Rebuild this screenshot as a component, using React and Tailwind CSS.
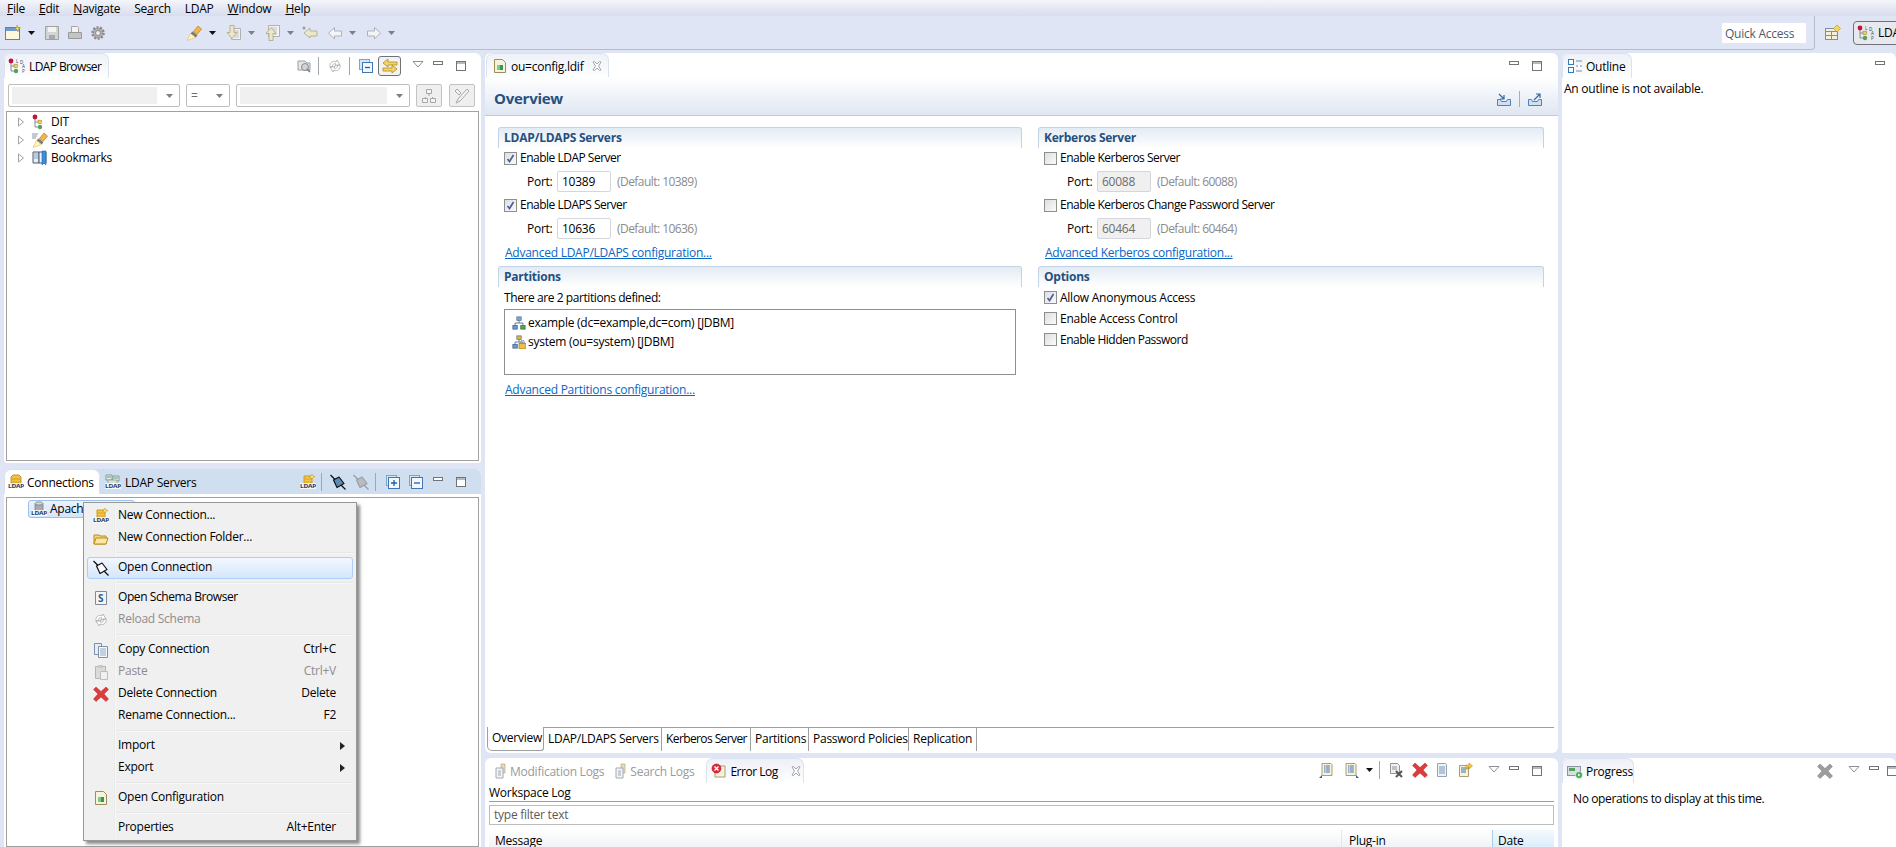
import React from 'react';

/* ── small icon helpers ─────────────────────────── */
const Svg = ({ children, w = 16, h = 16, box, className = '' }) => (
  <svg width={w} height={h} viewBox={box || `0 0 ${w} ${h}`} className={`shrink-0 ${className}`}>
    {children}
  </svg>
);

const DropArrow = ({ grey, className = '' }) => (
  <svg width="7" height="4" viewBox="0 0 7 4" className={`shrink-0 ${className}`}>
    <path d="M0 0h7L3.5 4z" fill={grey ? '#7c7f86' : '#111'} />
  </svg>
);
const ViewMenu = ({ className = '' }) => (
  <svg width="12" height="7" viewBox="0 0 12 7" className={`shrink-0 self-start mt-[8px] ${className}`}>
    <path d="M1 .5h10L6 6z" fill="#fff" stroke="#8a8f99" />
  </svg>
);
const MinBtn = ({ className = '' }) => (
  <svg width="10" height="4" viewBox="0 0 10 4" className={`shrink-0 self-start mt-[8px] ${className}`}>
    <rect x=".5" y=".5" width="9" height="3" fill="#fff" stroke="#6f737a" />
  </svg>
);
const MaxBtn = ({ className = '' }) => (
  <svg width="10" height="10" viewBox="0 0 10 10" className={`shrink-0 self-start mt-[8px] ${className}`}>
    <rect x=".5" y=".5" width="9" height="9" fill="#fff" stroke="#6f737a" />
    <path d="M0 2h10" stroke="#6f737a" />
  </svg>
);
const Sep = ({ className = '' }) => <div className={`w-px h-[18px] bg-[#a3a6ab] shrink-0 ${className}`} />;

const LdapTree = ({ letters }) => (
  <Svg w={18} h={16}>
    <path d="M3 4v9h4M3 8h4" stroke="#8a8a8a" fill="none" />
    <circle cx="3" cy="3" r="2.4" fill="#c4123e" />
    <rect x="6" y="6.200" width="3.400" height="3.400" fill="#ecd069" stroke="#a08a30" strokeWidth=".6" />
    <circle cx="8" cy="13" r="2.200" fill="#58a05a" />
    {letters && (
      <g fill="#1d3a66" fontSize="4.500">
        <text x="8" y="4.500">L</text>
        <text x="12" y="5.500">D</text>
        <text x="14" y="10">A</text>
        <text x="14" y="15">P</text>
      </g>
    )}
  </Svg>
);

const Torch = ({ lines }) => (
  <Svg>
    {lines && <path d="M0 2h6M0 4h5M0 6h4" stroke="#8794a8" />}
    <path d="M7.500 6.500L12 1l3.500 3-4.500 5.500z" fill="#f0b84a" stroke="#b47c1a" strokeWidth=".7" />
    <path d="M6.500 6.500l5 4-2 2-5-4z" fill="#77797e" />
    <path d="M4.500 8.500l5 4-8.500 3z" fill="#fff6c4" stroke="#e5b949" strokeWidth=".6" />
  </Svg>
);

const Bookmarks = () => (
  <Svg>
    <path d="M1 2h6v11H1z" fill="#e6eef8" stroke="#4a5a78" />
    <path d="M2 4h4M2 6h4M2 8h4" stroke="#8ea2bf" />
    <path d="M7 2h7v11H7z" fill="#eef3fa" stroke="#4a5a78" />
    <path d="M10 1h4v14l-2-2-2 2z" fill="#3b8fd8" stroke="#1f66a8" strokeWidth=".6" />
  </Svg>
);

const LdapWord = ({ y = 14, x = 0 }) => (
  <text x={x} y={y} fontSize="6" fontWeight="700" fill="#1d3a66" textLength="16" lengthAdjust="spacingAndGlyphs">
    LDAP
  </text>
);

const NewConn = () => (
  <Svg>
    <path d="M4 2h8v10H4z" fill="#f2c744" stroke="#c08a18" strokeWidth=".8" />
    <path d="M4 5h8M4 8h8" stroke="#d9a42a" />
    <path d="M12 0l1 2 2 .5-2 .8-1 2-1-2-2-.8 2-.5z" fill="#ffe680" stroke="#c08a18" strokeWidth=".5" />
    <rect x="0" y="9" width="16" height="6" fill="#fff" opacity=".75" />
    <LdapWord />
  </Svg>
);
const ConnsIcon = () => (
  <Svg>
    <path d="M5 1h6l2 2v9H3V3z" fill="#f0c24a" stroke="#b57f14" strokeWidth=".8" />
    <path d="M3 5h10M3 8h10" stroke="#d69f27" />
    <rect x="0" y="9" width="16" height="6" fill="#fff" opacity=".75" />
    <LdapWord />
  </Svg>
);
const ServersIcon = () => (
  <Svg>
    <path d="M1 1h6v5H1zM8 2h6v5H8z" fill="#e9eef2" stroke="#6c8c80" strokeWidth=".8" />
    <path d="M2 3h4M9 4h4" stroke="#58a05a" />
    <rect x="3" y="6" width="9" height="4" fill="#d9e2d8" stroke="#7d8d7d" strokeWidth=".6" />
    <rect x="0" y="9" width="16" height="6" fill="#fff" opacity=".8" />
    <LdapWord />
  </Svg>
);
const DbIcon = () => (
  <Svg>
    <path d="M4 2.500v8c0 2 8 2 8 0v-8" fill="#a9abb0" stroke="#70737a" strokeWidth=".7" />
    <ellipse cx="8" cy="2.500" rx="4" ry="1.600" fill="#d5d7da" stroke="#70737a" strokeWidth=".7" />
    <rect x="0" y="9" width="16" height="6" fill="#fff" opacity=".8" />
    <LdapWord />
  </Svg>
);
const Plug = ({ grey, dark }) => {
  const c = grey ? '#9a9da3' : '#111';
  return (
    <Svg>
      <path d="M.5 1L5 5.500M11 11l4.500 4.500" stroke={c} strokeWidth="1.300" />
      <path d="M3.500 6L9 3l5 6.500L7 13.500z" fill={grey ? '#b9bcc1' : dark ? '#5f8ab0' : '#f8fafd'} stroke={c} strokeWidth="1.200" strokeLinejoin="round" />
    </Svg>
  );
};
const Cross = ({ grey }) => (
  <Svg>
    <path
      d="M3 1l5 4.500L13 1l2.500 2.500L11 8l4.500 5L13 15.500 8 11l-5 4.500L.5 13 5 8 .5 3.500z"
      fill={grey ? '#9c9c9c' : '#dc3c3c'}
      stroke={grey ? '#7d7d7d' : '#b82828'}
      strokeWidth=".5"
    />
  </Svg>
);
const Refresh = () => (
  <Svg>
    <path d="M3 9c-1-4 3-7 6-5l1-2 3 5-5 .5 1-1.500C7 5 5 6.500 5.500 9zM13 7c1 4-3 7-6 5l-1 2-3-5 5-.5-1 1.500c2 1 4-.5 3.500-3z" fill="#fff" stroke="#a7a9ad" strokeWidth=".8" />
  </Svg>
);
const CloseX = ({ className = '' }) => (
  <svg width="10" height="10" viewBox="0 0 10 10" className={`shrink-0 ${className}`}>
    <path d="M1 1l1.500-.5L5 3l2.500-2.500L9 1 6.500 5 9 9l-1.500.5L5 7 2.500 9.500 1 9l2.500-4z" fill="#fff" stroke="#8c8f93" strokeWidth=".8" />
  </svg>
);
const ConfigFile = () => (
  <Svg>
    <path d="M2.500 1.500h8l3 3v10h-11z" fill="#f6f3dc" stroke="#9c8f55" />
    <rect x="5" y="7" width="6" height="5" fill="#2f9b52" />
    <rect x="5" y="7" width="3" height="5" fill="#7fc98f" />
  </Svg>
);
const LogDoc = ({ grey }) => (
  <Svg>
    <path d="M8 1h4v9H8z" fill={grey ? '#e6dcb8' : '#f0c24a'} stroke="#b7aa84" strokeWidth=".7" />
    <path d="M3 5h7v10H3z" fill="#f4f5f7" stroke="#a3a8b2" />
    <path d="M5 8h3M5 10h3M5 12h3" stroke="#a3a8b2" />
  </Svg>
);
const ListDoc = ({ corner }) => (
  <Svg>
    <path d="M3 1.500h9l1 1v11H3z" fill="#f6f2dc" stroke="#a99d72" />
    <path d="M5 4h6M5 6h6M5 8h6M5 10h6" stroke="#3c73b4" strokeDasharray="1 .5 4 0" />
    {corner === 'l' && <path d="M0 16l3-3v3z" fill="#2b66a8" />}
    {corner === 'r' && <path d="M16 16l-3-3v3z" fill="#2b66a8" />}
  </Svg>
);
const Partition = ({ lock }) => (
  <Svg w={14} h={14} box="0 0 16 16">
    <path d="M8 5v3M3.500 11V8h9v3" fill="none" stroke="#4d6c90" />
    <rect x="5.500" y="1" width="5" height="4" fill={lock ? '#e0b63a' : '#7ea7d4'} stroke="#4f6f94" strokeWidth=".8" />
    <rect x="1" y="11" width="5" height="4" fill="#6b9ad0" stroke="#2d5788" strokeWidth=".8" />
    <rect x="10" y="11" width="5" height="4" fill="#55a354" stroke="#2f6f30" strokeWidth=".8" />
    {lock && (
      <g>
        <rect x="8" y="9.500" width="8" height="6.500" fill="#eabf4a" stroke="#9a7a1c" strokeWidth=".8" />
        <path d="M10 9.500V8a2 2 0 0 1 4 0v1.500" fill="none" stroke="#8a8a8a" />
      </g>
    )}
  </Svg>
);

/* ── view chrome ────────────────────────────────── */
const ActiveTab = ({ icon, label, close, closeGap = 'ml-[9px]', className = '', labelClass = '' }) => (
  <div
    className={`flex items-center h-[25px] rounded-t-[7px] border-t border-x border-[#dde3ee] border-b-0 bg-gradient-to-b from-[#eef1f7] via-[#f5f7fb] to-white ${className}`}
  >
    {icon}
    <span className={`ml-[3px] pt-[2px] whitespace-nowrap ${labelClass}`}>{label}</span>
    {close && <CloseX className={closeGap} />}
  </div>
);

const Checkbox = ({ checked }) => (
  <div className="w-[13px] h-[13px] shrink-0 border border-[#8e8f8f] bg-gradient-to-br from-[#dcdfe3] to-[#fafafa] flex items-center justify-center">
    {checked && (
      <svg width="9" height="9" viewBox="0 0 9 9">
        <path d="M1.500 5l2 2.500L7.500 1" fill="none" stroke="#4f5f94" strokeWidth="1.700" />
      </svg>
    )}
  </div>
);

const CheckRow = ({ checked, label, tight, h = 'h-[20px]', className = '' }) => (
  <div className={`flex items-center ${h} pl-[6px] ${className}`}>
    <Checkbox checked={checked} />
    <span className={`ml-[3px] whitespace-nowrap ${tight ? 'tracking-[-0.5px]' : ''}`}>{label}</span>
  </div>
);

const PortRow = ({ value, hint, disabled }) => (
  <div className="flex items-center h-[21px] mt-[3px] pl-[29px]">
    <span className="w-[30px]">Port:</span>
    <div
      className={`w-[54px] h-[21px] border border-[#d3d6da] rounded-[2px] pl-[4px] flex items-center ${
        disabled ? 'bg-[#f0f0f0] text-[#6d6d6d]' : 'bg-white'
      }`}
    >
      {value}
    </div>
    <span className="ml-[6px] text-[#8b8b8b] tracking-[-0.55px]">{hint}</span>
  </div>
);

const Section = ({ title, children, className = '' }) => (
  <div className={className}>
    <div className="h-[21px] rounded-t-[3px] border-t border-x border-[#c3d3e6] bg-gradient-to-b from-[#e3ebf4] to-white pl-[5px] flex items-center font-bold text-[#25507e]">
      {title}
    </div>
    {children}
  </div>
);

const FormLink = ({ children, className = '' }) => (
  <div className={`pl-[7px] h-[20px] flex items-center text-[#0b66c4] ${className}`}>
    <span className="underline whitespace-nowrap">{children}</span>
  </div>
);

const Combo = ({ className = '', inner, children }) => (
  <div className={`h-[23px] border border-[#bdbdbd] rounded-[2px] flex items-center bg-white shrink-0 ${className}`}>
    {inner && <div className="flex-1 h-[17px] ml-[3px] mr-[9px] bg-[#f0f0f0]" />}
    {children}
    <DropArrow grey className="mr-[6px]" />
  </div>
);

const ToggleBtn = ({ children, className = '' }) => (
  <div className={`w-[26px] h-[23px] rounded-[2px] border border-[#c3c3c3] bg-[#efefef] flex items-center justify-center shrink-0 ${className}`}>
    {children}
  </div>
);

/* ── data ───────────────────────────────────────── */
const menuBar = [
  ['', 'F', 'ile', 'ml-[7px]'],
  ['', 'E', 'dit', 'ml-[14px]'],
  ['', 'N', 'avigate', 'ml-[14px]'],
  ['Se', 'a', 'rch', 'ml-[14px]'],
  ['LDAP', '', '', 'ml-[14px]'],
  ['', 'W', 'indow', 'ml-[14px]'],
  ['', 'H', 'elp', 'ml-[14px]'],
];

const contextMenu = [
  { label: 'New Connection...', icon: <NewConn /> },
  {
    label: 'New Connection Folder...',
    icon: (
      <Svg>
        <path d="M1 5h5l1 1h6v8H1z" fill="#f5d67a" stroke="#b98c22" />
        <path d="M1 14l2-6h12l-2 6z" fill="#fbe6a4" stroke="#b98c22" />
      </Svg>
    ),
  },
  { sep: true },
  { label: 'Open Connection', icon: <Plug />, active: true },
  { sep: true },
  {
    label: 'Open Schema Browser',
    cls: 'tracking-[-0.42px]',
    icon: (
      <Svg>
        <path d="M2.500 1.500h11v13h-11z" fill="#f5f5ef" stroke="#7d8aa0" />
        <text x="5" y="12" fontSize="10" fontWeight="700" fill="#2c5da0">S</text>
      </Svg>
    ),
  },
  { label: 'Reload Schema', icon: <Refresh />, disabled: true },
  { sep: true },
  {
    label: 'Copy Connection',
    keys: 'Ctrl+C',
    icon: (
      <Svg>
        <path d="M1.500 1.500h7v11h-7z" fill="#e6edf6" stroke="#7c8fa8" />
        <path d="M5.500 4.500h9v11h-9z" fill="#f4f7fb" stroke="#7c8fa8" />
        <path d="M7 7h6M7 9h6M7 11h6M7 13h6" stroke="#93a7c4" />
      </Svg>
    ),
  },
  {
    label: 'Paste',
    keys: 'Ctrl+V',
    disabled: true,
    icon: (
      <Svg>
        <path d="M2.500 2.500h10v12h-10z" fill="#dadada" stroke="#b5b5b5" />
        <rect x="5" y="1" width="5" height="3" fill="#c9c9c9" />
        <path d="M7.500 7.500h7v8h-7z" fill="#f0f0f0" stroke="#bdbdbd" />
      </Svg>
    ),
  },
  { label: 'Delete Connection', keys: 'Delete', icon: <Cross /> },
  { label: 'Rename Connection...', keys: 'F2' },
  { sep: true },
  { label: 'Import', sub: true },
  { label: 'Export', sub: true },
  { sep: true },
  { label: 'Open Configuration', icon: <ConfigFile /> },
  { sep: true },
  { label: 'Properties', keys: 'Alt+Enter' },
];

const editorTabs = [
  ['LDAP/LDAPS Servers', 'w-[118px]', ''],
  ['Kerberos Server', 'w-[89px]', 'tracking-[-0.6px]'],
  ['Partitions', 'w-[58px]', ''],
  ['Password Policies', 'w-[100px]', ''],
  ['Replication', 'w-[68px]', ''],
];

export default function App() {
  return (
    <div className="relative w-[1896px] h-[847px] overflow-hidden flex flex-col bg-[#dfe5f4] text-[12px] leading-none text-black font-['Open_Sans','Noto_Sans',sans-serif] tracking-[-0.25px]">
      {/* ── Menu bar ───────────────────────────────────── */}
      <div className="h-[16px] shrink-0 flex items-center pt-[2px] bg-gradient-to-b from-[#f4f5fa] to-[#d8ddee]">
        {menuBar.map(([before, key, after, gap]) => (
          <span key={before + key} className={`${gap} whitespace-nowrap`}>
            {before}
            {key ? <span className="underline">{key}</span> : null}
            {after}
          </span>
        ))}
      </div>

      {/* ── Toolbar ────────────────────────────────────── */}
      <div className="h-[34px] shrink-0 flex">
        <div className="flex-1 flex items-center pl-[5px] border-b border-r border-[#b5bccd] rounded-br-[4px]">
          <Svg>
            <rect x=".5" y="2.500" width="14" height="12" fill="#fdf8dc" stroke="#68809c" />
            <rect x="1" y="3" width="13" height="3" fill="#6d9bd0" />
            <path d="M12 0l1 2.500 2.500.5-2 1.200L13 7l-1-2.300-2.500-.7 2-1z" fill="#f7d65c" stroke="#b88d1e" strokeWidth=".5" />
          </Svg>
          <DropArrow className="ml-[7px]" />
          <Svg className="ml-[9px]">
            <path d="M1.500 1.500h13v13h-13z" fill="#d4d4d4" stroke="#a0a0a0" />
            <rect x="4" y="2" width="8" height="5" fill="#f3f3f3" />
            <rect x="5" y="10" width="6" height="4" fill="#a9a9a9" />
          </Svg>
          <Svg className="ml-[7px]">
            <path d="M4.500 1.500h6l1 1v5h-7z" fill="#f3f3f3" stroke="#a5a5a5" />
            <path d="M1.500 7.500h13v6h-13z" fill="#c4c4c4" stroke="#9a9a9a" />
          </Svg>
          <Svg className="ml-[7px]">
            <circle cx="8" cy="8" r="5.500" fill="#b0b0b0" stroke="#8a8a8a" strokeWidth="2.600" strokeDasharray="2 1.400" />
            <circle cx="8" cy="8" r="2.500" fill="#ededed" stroke="#8c8c8c" />
          </Svg>
          <div className="ml-[80px]">
            <Torch />
          </div>
          <DropArrow className="ml-[7px]" />
          <Svg className="ml-[10px]">
            <path d="M5.500 3.500h9v11h-9z" fill="#f2f2f2" stroke="#b0b0b0" />
            <path d="M8 6h5M8 8h5M8 10h5M8 12h5" stroke="#c4c4c4" />
            <path d="M4 .5h4v7h3l-5 6-5-6h3z" fill="#ece7c6" stroke="#aaa68c" strokeWidth=".8" />
          </Svg>
          <DropArrow grey className="ml-[6px]" />
          <Svg className="ml-[10px]">
            <path d="M3.500 .5h11v11h-11z" fill="#f2f2f2" stroke="#b0b0b0" />
            <path d="M6 3h6M6 5h6M9 7h3M9 9h3" stroke="#c4c4c4" />
            <path d="M4 15.500v-7H1l5-6 5 6H8v7z" fill="#ece7c6" stroke="#aaa68c" strokeWidth=".8" />
          </Svg>
          <DropArrow grey className="ml-[6px]" />
          <Svg className="ml-[8px]">
            <path d="M2 8l6-5v3h7v5H8v2z" fill="#ece7c6" stroke="#aaa88c" strokeWidth=".8" />
            <circle cx="2" cy="3" r="1.500" fill="#9c9c9c" />
          </Svg>
          <Svg className="ml-[9px]">
            <path d="M1.500 8l6-5.500V6h7v5h-7v3z" fill="#f4f4f4" stroke="#aeb2b8" />
          </Svg>
          <DropArrow grey className="ml-[6px]" />
          <Svg className="ml-[10px]">
            <path d="M14.500 8l-6-5.500V6h-7v5h7v3z" fill="#f4f4f4" stroke="#aeb2b8" />
          </Svg>
          <DropArrow grey className="ml-[6px]" />
          <div className="ml-auto mr-[8px] w-[84px] h-[20px] bg-white text-[#52596b] flex items-center pl-[3px] pt-[2px]">
            Quick Access
          </div>
        </div>
        <div className="w-[81px] shrink-0 flex items-center overflow-hidden">
          <Svg className="ml-[10px]">
            <rect x=".5" y="3.500" width="12" height="11" fill="#f4f0d8" stroke="#7e8ea4" />
            <path d="M.5 6.500h12M6.500 6.500v8M.5 10.500h12" stroke="#7e8ea4" />
            <path d="M12 0l3.500 3.500L12 7 8.500 3.500z" fill="#f7d65c" stroke="#b88d1e" strokeWidth=".6" />
          </Svg>
          <div className="ml-[7px] w-px h-[18px] bg-[#a3a6ab]" />
          <div className="ml-[5px] flex items-center pl-[3px] h-[24px] w-[60px] shrink-0 rounded-l-[4px] border border-[#6f7278] bg-[#e7e9ee]">
            <LdapTree letters />
            <span className="ml-[3px]">LDAP</span>
          </div>
        </div>
      </div>

      {/* ── Perspective ────────────────────────────────── */}
      <div className="flex-1 min-h-0 flex pt-[3px] pl-[4px] gap-[4px]">
        {/* Left column */}
        <div className="w-[477px] shrink-0 flex flex-col gap-[6px]">
          <div className="h-[410px] shrink-0 bg-white rounded-t-[6px] rounded-b-[3px] flex flex-col">
            <div className="h-[27px] shrink-0 flex items-start">
              <ActiveTab icon={<LdapTree letters />} label="LDAP Browser" labelClass="tracking-[-0.6px]" className="w-[105px] pl-[3px]" />
              <div className="ml-auto pr-[15px] flex items-center h-[25px]">
                <Svg>
                  <path d="M2 3h7l2 2h3v7H2z" fill="#e4e6e9" stroke="#9b9da1" />
                  <circle cx="9" cy="9" r="3.500" fill="#cfd3d6" stroke="#8a8c90" />
                  <path d="M11 11l3 3" stroke="#77797d" strokeWidth="1.500" />
                </Svg>
                <Sep className="ml-[6px]" />
                <div className="ml-[8px]">
                  <Refresh />
                </div>
                <Sep className="ml-[6px]" />
                <Svg className="ml-[8px]">
                  <rect x="1.500" y="1.500" width="10" height="10" fill="#d7e5f5" stroke="#7ea2ca" />
                  <rect x="4.500" y="4.500" width="10" height="10" fill="#f2f7fc" stroke="#3f76b4" />
                  <path d="M7 9.500h5" stroke="#1f5fa8" strokeWidth="1.300" />
                </Svg>
                <div className="ml-[4px] w-[23px] h-[20px] rounded-[3px] border border-[#6e7277] bg-[#f2f2f2] flex items-center justify-center">
                  <Svg>
                    <path d="M6 1L1 5l5 4V7h9V4H6zM10 7l5 4-5 4v-2H1v-3h9z" fill="#f1d46b" stroke="#b28a1c" strokeWidth=".8" />
                  </Svg>
                </div>
                <ViewMenu className="ml-[11px]" />
                <MinBtn className="ml-[9px]" />
                <MaxBtn className="ml-[13px]" />
              </div>
            </div>
            <div className="flex items-center h-[23px] mt-[4px] pl-[4px] shrink-0">
              <Combo inner className="w-[172px]" />
              <Combo className="w-[44px] ml-[6px] justify-between pl-[4px]">
                <span className="text-[#6d6d6d]">=</span>
              </Combo>
              <Combo inner className="w-[174px] ml-[6px]" />
              <ToggleBtn className="ml-[6px]">
                <Svg>
                  <path d="M5.500 1.500h5v4h-5zM1.500 10.500h5v4h-5zM9.500 10.500h5v4h-5z" fill="#f5f5f5" stroke="#a6a6a6" />
                  <path d="M8 6v2M5 9L4 10M11 9l1 1" stroke="#a6a6a6" />
                </Svg>
              </ToggleBtn>
              <ToggleBtn className="ml-[7px]">
                <Svg>
                  <path d="M3 1l4 4-2 2-4-4zM13 1l2 2L6 13l-4 2 2-4z" fill="#f5f5f5" stroke="#a6a6a6" />
                </Svg>
              </ToggleBtn>
            </div>
            <div className="mt-[4px] mx-[2px] mb-[2px] flex-1 border border-[#a0a0a0] bg-white pt-[1px]">
              {[
                ['DIT', <LdapTree key="d" />],
                ['Searches', <Torch key="s" lines />],
                ['Bookmarks', <Bookmarks key="b" />],
              ].map(([label, icon]) => (
                <div key={label} className="h-[18px] flex items-center pl-[10px]">
                  <svg width="8" height="10" viewBox="0 0 8 10" className="shrink-0">
                    <path d="M1.500 1l5 4-5 4z" fill="#fff" stroke="#a3a3a3" />
                  </svg>
                  <div className="ml-[7px] w-[16px]">{icon}</div>
                  <span className="ml-[3px]">{label}</span>
                </div>
              ))}
            </div>
          </div>

          <div className="flex-1 min-h-0 bg-white rounded-t-[6px] flex flex-col">
            <div className="h-[25px] shrink-0 flex items-center bg-[#cfdff0] rounded-t-[6px]">
              <ActiveTab icon={<ConnsIcon />} label="Connections" className="w-[96px] pl-[3px] bg-none bg-white" />
              <div className="ml-[5px]">
                <ServersIcon />
              </div>
              <span className="ml-[4px] pt-[2px] whitespace-nowrap">LDAP Servers</span>
              <div className="ml-auto pr-[15px] flex items-center h-full">
                <NewConn />
                <Sep className="ml-[5px]" />
                <div className="ml-[8px]">
                  <Plug dark />
                </div>
                <div className="ml-[7px]">
                  <Plug grey />
                </div>
                <Sep className="ml-[6px]" />
                <Svg className="ml-[9px]">
                  <rect x="1.500" y="1.500" width="10" height="10" fill="#d7e5f5" stroke="#7ea2ca" />
                  <rect x="3.500" y="3.500" width="11" height="11" fill="#f2f7fc" stroke="#3f76b4" />
                  <path d="M6 9h6M9 6v6" stroke="#1f5fa8" strokeWidth="1.300" />
                </Svg>
                <Svg className="ml-[7px]">
                  <rect x="1.500" y="1.500" width="10" height="10" fill="#d7e5f5" stroke="#7ea2ca" />
                  <rect x="3.500" y="3.500" width="11" height="11" fill="#f2f7fc" stroke="#3f76b4" />
                  <path d="M6 9h6" stroke="#1f5fa8" strokeWidth="1.300" />
                </Svg>
                <MinBtn className="ml-[9px]" />
                <MaxBtn className="ml-[13px]" />
              </div>
            </div>
            <div className="mt-[3px] mx-[2px] flex-1 border border-[#a0a0a0] bg-white pt-[2px]">
              <div className="ml-[21px] w-[107px] h-[18px] flex items-center pl-[2px] rounded-[3px] border border-[#9cc0ea] bg-gradient-to-b from-[#eaf3fd] to-[#d3e6fb]">
                <DbIcon />
                <span className="ml-[3px] pb-[1px]">Apache DS</span>
              </div>
            </div>
          </div>
        </div>

        {/* Center column */}
        <div className="w-[1073px] shrink-0 flex flex-col gap-[5px]">
          <div className="h-[700px] shrink-0 bg-white rounded-t-[6px] rounded-b-[6px] flex flex-col">
            <div className="h-[24px] shrink-0 flex items-start">
              <ActiveTab icon={<ConfigFile />} label="ou=config.ldif" close className="ml-px w-[123px] pl-[5px]" />
              <div className="ml-auto pr-[16px] flex items-start h-[20px]">
                <MinBtn />
                <MaxBtn className="ml-[13px]" />
              </div>
            </div>
            <div className="h-[39px] shrink-0 border-b border-[#bccadd] bg-gradient-to-b from-white to-[#dfe7f1] flex items-center pl-[9px] pt-[5px]">
              <span className="text-[15px] font-bold text-[#27507f]">Overview</span>
              <div className="ml-auto pr-[15px] flex items-center">
                <Svg>
                  <path d="M1.500 8.500v6h13v-6h-3l-1 2h-5l-1-2z" fill="#cfe0f2" stroke="#4f82b8" />
                  <path d="M3 3l5 5M8 4v4H4" fill="none" stroke="#2f6aa8" strokeWidth="1.200" />
                </Svg>
                <div className="ml-[7px] w-px h-[16px] bg-[#9fb0c6]" />
                <Svg className="ml-[7px]">
                  <path d="M1.500 8.500v6h13v-6h-3l-1 2h-5l-1-2z" fill="#cfe0f2" stroke="#4f82b8" />
                  <path d="M7 9l6-6M9 3h4v4" fill="none" stroke="#2f6aa8" strokeWidth="1.200" />
                </Svg>
              </div>
            </div>

            {/* Form */}
            <div className="flex-1 min-h-0 flex pl-[13px] pt-[11px]">
              <div className="w-[524px] shrink-0">
                <Section title="LDAP/LDAPS Servers">
                  <CheckRow checked tight label="Enable LDAP Server" />
                  <PortRow value="10389" hint="(Default: 10389)" />
                  <CheckRow checked tight label="Enable LDAPS Server" className="mt-[3px]" />
                  <PortRow value="10636" hint="(Default: 10636)" />
                  <FormLink className="mt-[4px]">Advanced LDAP/LDAPS configuration...</FormLink>
                </Section>
                <Section title="Partitions" className="mt-[3px]">
                  <div className="h-[21px] pl-[6px] flex items-center tracking-[-0.42px]">There are 2 partitions defined:</div>
                  <div className="mx-[6px] mt-[1px] h-[66px] border border-[#8f8f8f] pt-[3px] pl-[7px]">
                    <div className="h-[19px] flex items-center">
                      <Partition />
                      <span className="ml-[2px] whitespace-nowrap">example (dc=example,dc=com) [JDBM]</span>
                    </div>
                    <div className="h-[19px] flex items-center">
                      <Partition lock />
                      <span className="ml-[2px] whitespace-nowrap">system (ou=system) [JDBM]</span>
                    </div>
                  </div>
                  <FormLink className="mt-[5px]">Advanced Partitions configuration...</FormLink>
                </Section>
              </div>
              <div className="w-[506px] shrink-0 ml-[16px]">
                <Section title="Kerberos Server">
                  <CheckRow tight label="Enable Kerberos Server" />
                  <PortRow disabled value="60088" hint="(Default: 60088)" />
                  <CheckRow tight label="Enable Kerberos Change Password Server" className="mt-[3px]" />
                  <PortRow disabled value="60464" hint="(Default: 60464)" />
                  <FormLink className="mt-[4px]">Advanced Kerberos configuration...</FormLink>
                </Section>
                <Section title="Options" className="mt-[3px]">
                  <CheckRow checked label="Allow Anonymous Access" h="h-[21px]" />
                  <CheckRow label="Enable Access Control" h="h-[21px]" />
                  <CheckRow tight label="Enable Hidden Password" h="h-[21px]" />
                </Section>
              </div>
            </div>

            {/* Editor pages */}
            <div className="h-[26px] shrink-0 flex pl-[2px] pr-[4px]">
              <div className="w-[57px] h-[24px] rounded-bl-[5px] rounded-br-[3px] border-b border-r border-l border-[#a0a0a0] flex items-center pl-[4px] pb-[1px]">
                Overview
              </div>
              <div className="flex-1 flex border-t border-[#a0a0a0]">
                {editorTabs.map(([label, width, cls]) => (
                  <div key={label} className={`${width} ${cls} h-[23px] border-r border-[#a0a0a0] flex items-center pl-[4px] pb-[2px] whitespace-nowrap`}>
                    {label}
                  </div>
                ))}
              </div>
            </div>
          </div>

          {/* Log view */}
          <div className="flex-1 min-h-0 bg-white rounded-t-[6px] flex flex-col overflow-hidden">
            <div className="h-[24px] shrink-0 flex items-start">
              <div className="flex items-center h-[25px] pl-[8px] text-[#9a9a9a]">
                <LogDoc grey />
                <span className="ml-[1px] pt-[2px] whitespace-nowrap">Modification Logs</span>
              </div>
              <div className="flex items-center h-[25px] pl-[9px] text-[#9a9a9a]">
                <LogDoc grey />
                <span className="ml-[1px] pt-[2px] whitespace-nowrap">Search Logs</span>
              </div>
              <ActiveTab
                icon={
                  <Svg>
                    <path d="M6 3h8v11H4V9" fill="#f6f2dc" stroke="#a99d72" />
                    <circle cx="5.500" cy="5.500" r="4.500" fill="#e0283c" stroke="#a81020" strokeWidth=".6" />
                    <path d="M3.500 3.500l4 4M7.500 3.500l-4 4" stroke="#fff" strokeWidth="1.300" />
                  </Svg>
                }
                label="Error Log"
                labelClass="tracking-[-0.5px]"
                close
                closeGap="ml-[13px]"
                className="ml-[12px] w-[98px] pl-[4px]"
              />
              <div className="ml-auto pr-[16px] flex items-center h-[24px]">
                <ListDoc corner="l" />
                <div className="ml-[8px]">
                  <ListDoc corner="r" />
                </div>
                <DropArrow className="ml-[7px]" />
                <Sep className="ml-[6px]" />
                <Svg className="ml-[8px]">
                  <path d="M2.500 1.500h7l2 2v8h-9z" fill="#eef0f2" stroke="#8e959e" />
                  <path d="M4 5h5M4 7h5" stroke="#8e959e" />
                  <path d="M8 9l6 6M14 9l-6 6" stroke="#555" strokeWidth="2" />
                </Svg>
                <div className="ml-[8px]">
                  <Cross />
                </div>
                <Svg className="ml-[6px]">
                  <path d="M3.500 1.500h8l1 1v12h-9z" fill="#eef3fa" stroke="#93a3b8" />
                  <path d="M5 5h6M5 7h6M5 9h6M5 11h6" stroke="#7d93b2" />
                </Svg>
                <Svg className="ml-[7px]">
                  <path d="M2.500 3.500h9v11h-9z" fill="#f6f2dc" stroke="#a99d72" />
                  <path d="M4 6h5M4 8h5M4 10h5" stroke="#3c73b4" />
                  <path d="M9 7V3h3V1l3.500 3L12 7V5h-1v2z" fill="#f3c64a" stroke="#b88d1e" strokeWidth=".6" />
                </Svg>
                <ViewMenu className="ml-[15px]" />
                <MinBtn className="ml-[9px]" />
                <MaxBtn className="ml-[13px]" />
              </div>
            </div>
            <div className="h-[20px] shrink-0 mx-[4px] border-b border-[#a0a0a0] flex items-center pt-[2px]">Workspace Log</div>
            <div className="h-[20px] shrink-0 mt-[3px] mx-[4px] border border-[#bcbcbc] flex items-center pl-[4px] pb-[1px] text-[#5b5b5b]">
              type filter text
            </div>
            <div className="h-[17px] shrink-0 mt-[5px] mx-[4px] flex items-end bg-gradient-to-b from-white to-[#f1f2f5]">
              <div className="w-[852px] pl-[6px] h-[9px] leading-[5px]">Message</div>
              <div className="w-[151px] h-full border-l border-[#e4e5e7] pl-[7px] flex items-end">
                <span className="h-[9px] leading-[5px]">Plug-in</span>
              </div>
              <div className="flex-1 h-full border-l border-[#a9cfe8] pl-[5px] bg-gradient-to-b from-[#f2f9fd] to-[#dceefa] flex items-end">
                <span className="h-[9px] leading-[5px]">Date</span>
              </div>
            </div>
          </div>
        </div>

        {/* Right column */}
        <div className="flex-1 min-w-0 flex flex-col gap-[5px] overflow-hidden">
          <div className="h-[700px] shrink-0 bg-white rounded-t-[6px] flex flex-col">
            <div className="h-[25px] shrink-0 flex items-start">
              <ActiveTab
                icon={
                  <Svg>
                    <rect x="1.500" y="1.500" width="5" height="5" fill="#fff" stroke="#3a78bc" />
                    <rect x="1.500" y="9.500" width="5" height="5" fill="#fff" stroke="#3a78bc" />
                    <path d="M9 3h6M9 8h2M13 8h2M9 13h6" stroke="#6f8aa8" />
                  </Svg>
                }
                label="Outline"
                className="w-[70px] pl-[4px]"
              />
              <MinBtn className="ml-[243px]" />
            </div>
            <div className="mt-[5px] pl-[2px]">An outline is not available.</div>
          </div>
          <div className="flex-1 min-h-0 bg-white rounded-t-[6px] flex flex-col">
            <div className="h-[25px] shrink-0 flex items-center">
              <ActiveTab
                icon={
                  <Svg>
                    <rect x=".5" y="3.500" width="13" height="9" fill="#d9dee6" stroke="#8c96a3" />
                    <rect x="2" y="5" width="6" height="3" fill="#58a05a" />
                    <circle cx="12" cy="12" r="3.500" fill="#43a653" stroke="#fff" strokeWidth=".6" />
                    <path d="M11 10.500l2.500 1.500-2.500 1.500z" fill="#fff" />
                  </Svg>
                }
                label="Progress"
                className="w-[74px] pl-[4px]"
              />
              <div className="ml-[183px]">
                <Cross grey />
              </div>
              <ViewMenu className="ml-[15px]" />
              <MinBtn className="ml-[9px]" />
              <MaxBtn className="ml-[8px]" />
            </div>
            <div className="mt-[10px] pl-[11px] tracking-[-0.38px]">No operations to display at this time.</div>
          </div>
        </div>
      </div>

      {/* ── Context menu ───────────────────────────────── */}
      <div className="absolute left-[83px] top-[502px] w-[274px] h-[339px] border border-[#979797] bg-[#f0f0f0] shadow-[3px_3px_3px_rgba(0,0,0,0.45)] pt-[2px]">
        <div className="absolute left-[30px] top-[2px] bottom-[2px] w-[2px] bg-gradient-to-r from-[#e2e3e3] to-white" />
        {contextMenu.map((item, i) =>
          item.sep ? (
            <div key={i} className="h-[8px] flex items-center pl-[30px] pr-[3px]">
              <div className="h-[2px] w-full bg-gradient-to-b from-[#e0e0e0] to-white" />
            </div>
          ) : (
            <div
              key={i}
              className={`relative mx-[3px] h-[22px] flex items-center rounded-[3px] border ${
                item.active ? 'border-[#aecff7] bg-gradient-to-b from-[#f2f7fe] to-[#d5e6fc]' : 'border-transparent'
              } ${item.disabled ? 'text-[#8d8d8d]' : ''}`}
            >
              <div className="w-[26px] flex justify-center">{item.icon}</div>
              <span className={`ml-[4px] pb-[2px] flex-1 whitespace-nowrap ${item.cls || ''}`}>{item.label}</span>
              {item.keys && <span className="mr-[16px] pb-[2px] whitespace-nowrap">{item.keys}</span>}
              {item.sub && (
                <svg width="5" height="8" viewBox="0 0 5 8" className="mr-[7px]">
                  <path d="M0 0l5 4-5 4z" fill="#222" />
                </svg>
              )}
            </div>
          )
        )}
      </div>
    </div>
  );
}
